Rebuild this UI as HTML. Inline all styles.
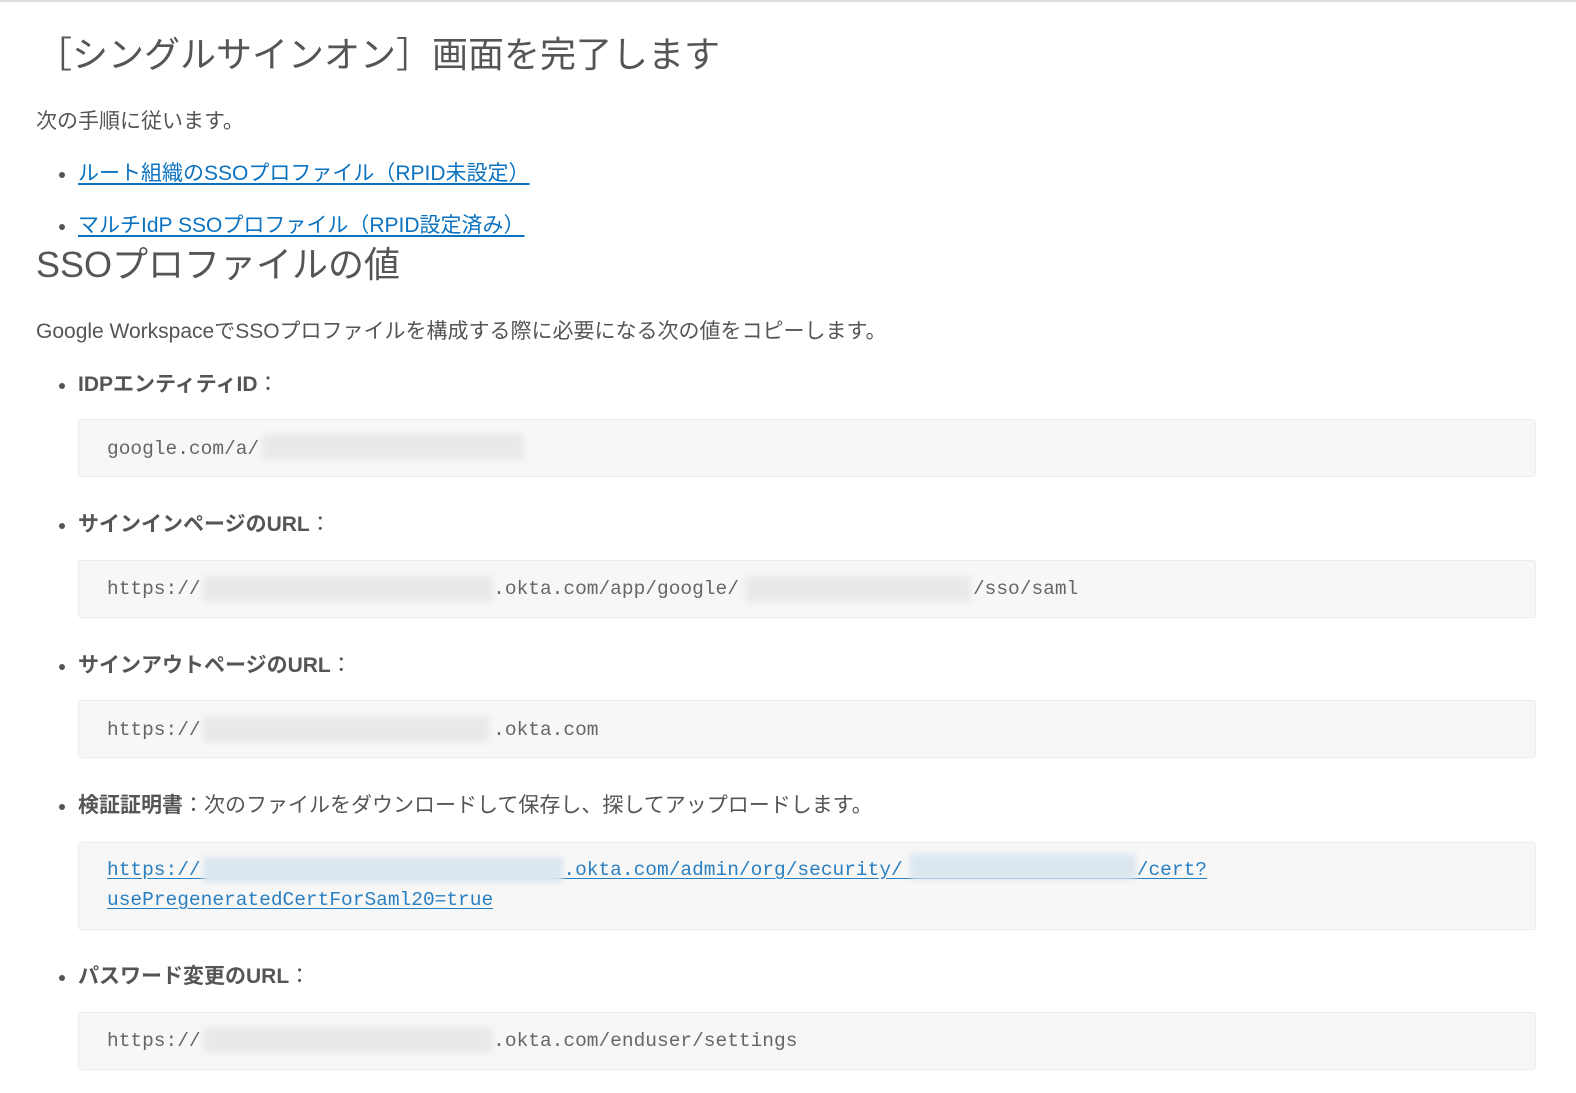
<!DOCTYPE html>
<html><head><meta charset="utf-8"><style>
body{margin:0;width:1576px;height:1093px;background:#fff;position:relative;overflow:hidden;font-family:"Liberation Sans","Noto Sans CJK JP",sans-serif;color:#555}
.t{position:absolute;white-space:nowrap;line-height:1}
.b{font-size:21px}
.li:before{content:"";position:absolute;left:-19px;top:9px;width:6px;height:6px;border-radius:50%;background:#555}
a{color:#0a72c0;text-decoration:underline;text-underline-offset:3px}
.box{position:absolute;left:78px;width:1456px;background:#f7f7f7;border:1px solid #ececec;border-radius:3px}
.m{position:absolute;left:107px;font-family:"Liberation Mono",monospace;font-size:19.5px;color:#666;white-space:nowrap;line-height:1}
.bl{position:absolute;background:#e9e9e9;filter:blur(3px);height:26px}
.bb{background:#dbe6ef}
</style></head><body>
<div style="position:absolute;left:0;top:0;width:1576px;height:2px;background:#ddd"></div>
<div class="t" style="left:36px;top:37px;font-size:36px;color:#555">［シングルサインオン］画面を完了します</div>
<div class="t b" style="left:36px;top:111px">次の手順に従います。</div>
<div class="t b li" style="left:78px;top:163px"><a>ルート組織のSSOプロファイル（RPID未設定）</a></div>
<div class="t b li" style="left:78px;top:215px"><a>マルチIdP SSOプロファイル（RPID設定済み）</a></div>
<div class="t" style="left:36px;top:247px;font-size:36px">SSOプロファイルの値</div>
<div class="t b" style="left:36px;top:321px">Google WorkspaceでSSOプロファイルを構成する際に必要になる次の値をコピーします。</div>

<div class="t b li" style="left:78px;top:374px"><b>IDPエンティティID</b>：</div>
<div class="box" style="top:419px;height:56px"></div>
<div class="m" style="top:440px">google.com/a/</div>
<div class="bl" style="left:262px;top:434px;width:262px"></div>

<div class="t b li" style="left:78px;top:514px"><b>サインインページのURL</b>：</div>
<div class="box" style="top:560px;height:56px"></div>
<div class="m" style="top:580px">https://&nbsp;&nbsp;&nbsp;&nbsp;&nbsp;&nbsp;&nbsp;&nbsp;&nbsp;&nbsp;&nbsp;&nbsp;&nbsp;&nbsp;&nbsp;&nbsp;&nbsp;&nbsp;&nbsp;&nbsp;&nbsp;&nbsp;&nbsp;&nbsp;&nbsp;.okta.com/app/google/&nbsp;&nbsp;&nbsp;&nbsp;&nbsp;&nbsp;&nbsp;&nbsp;&nbsp;&nbsp;&nbsp;&nbsp;&nbsp;&nbsp;&nbsp;&nbsp;&nbsp;&nbsp;&nbsp;&nbsp;/sso/saml</div>
<div class="bl" style="left:203px;top:576px;width:290px"></div>
<div class="bl" style="left:745px;top:576px;width:226px"></div>

<div class="t b li" style="left:78px;top:655px"><b>サインアウトページのURL</b>：</div>
<div class="box" style="top:700px;height:56px"></div>
<div class="m" style="top:721px">https://&nbsp;&nbsp;&nbsp;&nbsp;&nbsp;&nbsp;&nbsp;&nbsp;&nbsp;&nbsp;&nbsp;&nbsp;&nbsp;&nbsp;&nbsp;&nbsp;&nbsp;&nbsp;&nbsp;&nbsp;&nbsp;&nbsp;&nbsp;&nbsp;&nbsp;.okta.com</div>
<div class="bl" style="left:203px;top:716px;width:286px"></div>

<div class="t b li" style="left:78px;top:795px"><b>検証証明書</b>：次のファイルをダウンロードして保存し、探してアップロードします。</div>
<div class="box" style="top:842px;height:86px"></div>
<div class="m" style="top:861px;color:#2a7fc0;text-decoration:underline;text-underline-offset:3px">https://&nbsp;&nbsp;&nbsp;&nbsp;&nbsp;&nbsp;&nbsp;&nbsp;&nbsp;&nbsp;&nbsp;&nbsp;&nbsp;&nbsp;&nbsp;&nbsp;&nbsp;&nbsp;&nbsp;&nbsp;&nbsp;&nbsp;&nbsp;&nbsp;&nbsp;&nbsp;&nbsp;&nbsp;&nbsp;&nbsp;&nbsp;.okta.com/admin/org/security/&nbsp;&nbsp;&nbsp;&nbsp;&nbsp;&nbsp;&nbsp;&nbsp;&nbsp;&nbsp;&nbsp;&nbsp;&nbsp;&nbsp;&nbsp;&nbsp;&nbsp;&nbsp;&nbsp;&nbsp;/cert?</div>
<div class="bl bb" style="left:203px;top:857px;width:360px"></div>
<div class="bl bb" style="left:910px;top:854px;width:226px"></div>
<div class="m" style="top:891px;color:#2a7fc0;text-decoration:underline;text-underline-offset:3px">usePregeneratedCertForSaml20=true</div>

<div class="t b li" style="left:78px;top:966px"><b>パスワード変更のURL</b>：</div>
<div class="box" style="top:1012px;height:56px"></div>
<div class="m" style="top:1032px">https://&nbsp;&nbsp;&nbsp;&nbsp;&nbsp;&nbsp;&nbsp;&nbsp;&nbsp;&nbsp;&nbsp;&nbsp;&nbsp;&nbsp;&nbsp;&nbsp;&nbsp;&nbsp;&nbsp;&nbsp;&nbsp;&nbsp;&nbsp;&nbsp;&nbsp;.okta.com/enduser/settings</div>
<div class="bl" style="left:203px;top:1027px;width:290px"></div>
</body></html>
